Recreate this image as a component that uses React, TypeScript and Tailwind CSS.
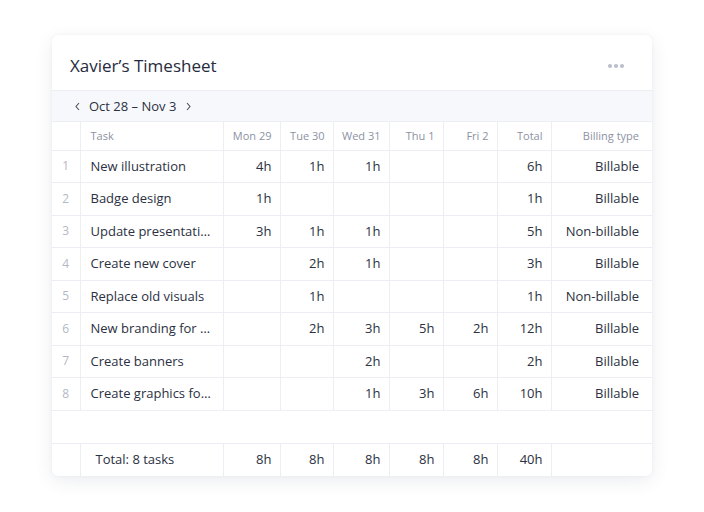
import React from 'react';

interface Row {
  task: string;
  hours: (string | null)[];
  total: string;
  billing: string;
}

const days = ['Mon 29', 'Tue 30', 'Wed 31', 'Thu 1', 'Fri 2'];
const dayWidths = ['w-[57px]', 'w-[53px]', 'w-[56px]', 'w-[54px]', 'w-[54px]'];

const rows: Row[] = [
  { task: 'New illustration', hours: ['4h', '1h', '1h', null, null], total: '6h', billing: 'Billable' },
  { task: 'Badge design', hours: ['1h', null, null, null, null], total: '1h', billing: 'Billable' },
  { task: 'Update presentation slides', hours: ['3h', '1h', '1h', null, null], total: '5h', billing: 'Non-billable' },
  { task: 'Create new cover', hours: [null, '2h', '1h', null, null], total: '3h', billing: 'Billable' },
  { task: 'Replace old visuals', hours: [null, '1h', null, null, null], total: '1h', billing: 'Non-billable' },
  { task: 'New branding for client', hours: [null, '2h', '3h', '5h', '2h'], total: '12h', billing: 'Billable' },
  { task: 'Create banners', hours: [null, null, '2h', null, null], total: '2h', billing: 'Billable' },
  { task: 'Create graphics for social', hours: [null, null, '1h', '3h', '6h'], total: '10h', billing: 'Billable' },
];

const cell = 'border-r border-[#eceef4] pr-2 text-right';

const App = () => {
  return (
    <div
      className="w-[704px] h-[512px] bg-white pt-[35px] pl-[52px]"
      style={{ fontFamily: '"Open Sans", "Noto Sans", sans-serif' }}
    >
      <div className="w-[600px] rounded-md bg-white shadow-[0_5px_18px_rgba(40,50,90,0.09),0_0_3px_rgba(40,50,90,0.06)] overflow-hidden">
        {/* header */}
        <div className="h-[55px] flex items-center justify-between pt-[6px] pl-[18px] pr-[28px]">
          <h1 className="text-[17px] text-[#262b3d]">Xavier’s Timesheet</h1>
          <div className="flex gap-[2px]">
            <span className="w-[4px] h-[4px] rounded-full bg-[#b9bdc9]" />
            <span className="w-[4px] h-[4px] rounded-full bg-[#b9bdc9]" />
            <span className="w-[4px] h-[4px] rounded-full bg-[#b9bdc9]" />
          </div>
        </div>

        {/* date switcher */}
        <div className="h-[32px] flex items-center bg-[#f7f8fb] border-y border-[#eceef4] pl-[22px] pt-[1px] text-[13px] text-[#2b3042]">
          <svg width="7" height="9" viewBox="0 0 7 9" className="mr-[8px]">
            <path d="M5 1 L2 4.5 L5 8" fill="none" stroke="#4a4f60" strokeWidth="1.1" />
          </svg>
          <span>Oct 28 – Nov 3</span>
          <svg width="7" height="9" viewBox="0 0 7 9" className="ml-[9px]">
            <path d="M2 1 L5 4.5 L2 8" fill="none" stroke="#4a4f60" strokeWidth="1.1" />
          </svg>
        </div>

        <table className="w-[600px] table-fixed border-collapse text-[13px] text-[#2b3042]">
          <thead>
            <tr className="h-[28px] border-b border-[#eceef4] text-[11px] text-[#8d92a3]">
              <th className="w-[28px] border-r border-[#eceef4] font-normal" />
              <th className="w-[143px] border-r border-[#eceef4] pl-[10px] text-left font-normal">Task</th>
              {days.map((d, i) => (
                <th key={d} className={`${dayWidths[i]} ${cell} font-normal`}>{d}</th>
              ))}
              <th className={`w-[54px] ${cell} font-normal`}>Total</th>
              <th className="w-[101px] pr-[13px] text-right font-normal">Billing type</th>
            </tr>
          </thead>
          <tbody>
            {rows.map((r, idx) => (
              <tr key={r.task} className="h-[32.5px] border-b border-[#eceef4]">
                <td className="border-r border-[#eceef4] text-center text-[12px] text-[#b4b8c4]">{idx + 1}</td>
                <td className="border-r border-[#eceef4] pl-[10px] pr-[10px] truncate">{r.task}</td>
                {r.hours.map((h, i) => (
                  <td key={i} className={cell}>{h}</td>
                ))}
                <td className={cell}>{r.total}</td>
                <td className="pr-[13px] text-right">{r.billing}</td>
              </tr>
            ))}
            <tr className="h-[33px] border-b border-[#eceef4]">
              <td colSpan={9} />
            </tr>
            <tr className="h-[33px]">
              <td className="border-r border-[#eceef4]" />
              <td className="border-r border-[#eceef4] pl-[15px]">Total: 8 tasks</td>
              {['8h', '8h', '8h', '8h', '8h'].map((h, i) => (
                <td key={i} className={cell}>{h}</td>
              ))}
              <td className={cell}>40h</td>
              <td />
            </tr>
          </tbody>
        </table>
      </div>
    </div>
  );
};

export default App;
